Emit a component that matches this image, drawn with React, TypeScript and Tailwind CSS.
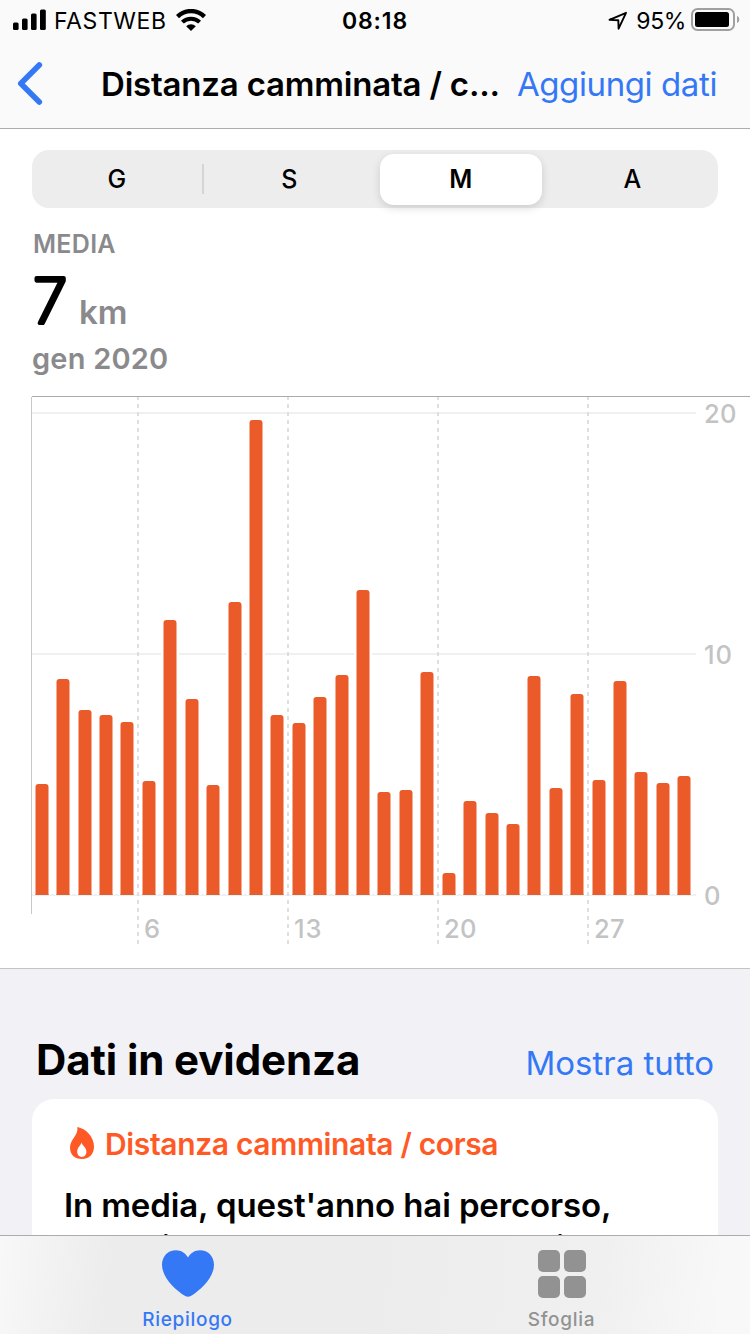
import React, { useState } from "react";

interface DayDistance {
  day: number;
  top: number;
}

const BASELINE = 895;
const CHART_TOP = 396;

// y of the top edge of every bar, one per day of the month
const barTops = [
  784, 679, 710, 715, 722, 781, 620, 699, 785, 602, 420, 715, 723, 697, 675,
  590, 792, 790, 672, 873, 801, 813, 824, 676, 788, 694, 780, 681, 772, 783,
  776,
];

const days: DayDistance[] = barTops.map((top, i) => ({ day: i + 1, top }));

const barX = (day: number) => Math.floor(35.25 + 21.418 * (day - 1)) + 0.5;

const StatusBar: React.FC = () => (
  <div className="grid h-[41px] grid-cols-3 items-center pr-[10px] pl-[13px] text-black">
    <div className="flex items-center">
      <svg width="33" height="22" viewBox="0 0 33 22" className="-mt-px">
        <rect x="0" y="13.5" width="5.6" height="7.5" rx="1.5" />
        <rect x="9" y="9.5" width="5.6" height="11.5" rx="1.5" />
        <rect x="18" y="4.5" width="5.6" height="16.5" rx="1.5" />
        <rect x="27" y="0.5" width="5.8" height="20.5" rx="1.5" />
      </svg>
      <span className="ml-2 pt-px text-[23px] tracking-[0.6px]">FASTWEB</span>
      <svg
        width="30"
        height="22"
        viewBox="0 0 30 22"
        className="-mt-[2px] ml-[9px]"
      >
        <path
          d="M1.5 7.6a19.2 19.2 0 0 1 27 0"
          fill="none"
          stroke="#000"
          strokeWidth="4.4"
        />
        <path
          d="M6.4 13.200a12.2 12.2 0 0 1 17.2 0"
          fill="none"
          stroke="#000"
          strokeWidth="4"
        />
        <path d="M10.2 17.300a6.8 6.8 0 0 1 9.6 0L15 22z" />
      </svg>
    </div>
    <span className="pt-px pr-[3px] text-center text-[23px] font-semibold tracking-[0.9px]">
      08:18
    </span>
    <div className="flex items-center justify-end">
      <svg width="20" height="20" viewBox="0 0 20 20">
        <path
          d="M1.5 8.8 18 1.800 10.600 17.700 10.300 9.200z"
          fill="none"
          stroke="#000"
          strokeWidth="1.9"
          strokeLinejoin="round"
        />
      </svg>
      <span className="ml-2 pt-px text-[23px] tracking-[-0.4px]">95%</span>
      <svg
        width="49"
        height="24"
        viewBox="0 0 49 24"
        className="-mt-[3px] ml-[5px]"
      >
        <rect
          x="1"
          y="2"
          width="42"
          height="21"
          rx="5.5"
          fill="none"
          stroke="#a0a0a0"
          strokeWidth="2"
        />
        <rect x="4" y="5" width="34" height="15" rx="2.5" />
        <path d="M46 9c3 .8 3 6.200 0 7z" fill="#a0a0a0" />
      </svg>
    </div>
  </div>
);

const DistanceChart: React.FC = () => (
  <svg
    width="750"
    height="572"
    viewBox={`0 ${CHART_TOP} 750 572`}
    className="block"
  >
    {[412, 653, 894].map((y) => (
      <rect key={y} x="32" y={y} width="664" height="2" fill="#f0f0f0" />
    ))}
    {days.map(({ day, top }) => (
      <rect
        key={day}
        x={barX(day) - 2.5}
        y={top - 2.5}
        width="18"
        height={BASELINE - top + 2.5}
        fill="#fff"
      />
    ))}
    {[138, 288, 438, 588].map((x) => (
      <line
        key={x}
        x1={x}
        x2={x}
        y1="396"
        y2="944"
        stroke="#dfdfdf"
        strokeWidth="2"
        strokeDasharray="4 4"
      />
    ))}
    {days.map(({ day, top }) => (
      <g key={day}>
        <path
          d={`M${barX(day)} ${BASELINE}V${top + 3}q0-3 3-3h7q3 0 3 3V${BASELINE}z`}
          fill="#eb5a29"
        />
        <rect
          x={barX(day)}
          y={BASELINE - 1}
          width="13"
          height="1"
          fill="#dc6137"
        />
      </g>
    ))}
    <rect x="31" y="397" width="1" height="517" fill="#c8c8c8" />
    <rect x="32" y="396" width="718" height="1" fill="#aaaaaa" />
    <g fill="#c3c3c4" fontSize="25.5" fontWeight="500" letterSpacing="0.3">
      <text x="704" y="423">20</text>
      <text x="704" y="664" letterSpacing="1">10</text>
      <text x="704" y="905">0</text>
      <text x="144" y="938">6</text>
      <text x="294" y="938" letterSpacing="1">13</text>
      <text x="444" y="938">20</text>
      <text x="594" y="938">27</text>
    </g>
  </svg>
);

const App: React.FC = () => {
  const [range, setRange] = useState("M");

  return (
    <div className="flex h-[1334px] w-[750px] flex-col overflow-hidden bg-white font-['Inter',sans-serif] whitespace-nowrap">
      <header className="h-[129px] shrink-0 border-b border-[#acacac] bg-[#fafafb]">
        <StatusBar />
        <div className="flex h-[87px] items-center pr-[33px] pl-4">
          <svg
            width="28"
            height="44"
            viewBox="0 0 28 44"
            className="-mt-[3px]"
          >
            <path
              d="M23.300 4 4.800 22.500 23.300 41"
              fill="none"
              stroke="#3478f6"
              strokeWidth="5.6"
              strokeLinecap="round"
              strokeLinejoin="round"
            />
          </svg>
          <h1 className="ml-[57px] text-[33px] font-semibold tracking-[-0.2px]">
            Distanza camminata / c...
          </h1>
          <button className="ml-auto text-[33px] tracking-[-0.4px] text-[#3478f6]">
            Aggiungi dati
          </button>
        </div>
      </header>

      <div className="px-8 pt-[21px]">
        <div className="grid h-[58px] grid-cols-4 rounded-[17px] bg-[#ededed] text-[25px] font-medium">
          {["G", "S", "M", "A"].map((item) => (
            <button
              key={item}
              onClick={() => setRange(item)}
              className="flex items-center"
            >
              {range === item ? (
                <span className="mx-auto flex h-[51px] w-[162px] items-center justify-center rounded-[14px] bg-white pt-0.5 font-semibold shadow-[0_3px_8px_rgba(0,0,0,0.14)]">
                  {item}
                </span>
              ) : (
                <span className="flex-1 pt-0.5">{item}</span>
              )}
              {item === "G" && (
                <span className="h-[30px] w-0.5 bg-[#d5d5d7]" />
              )}
            </button>
          ))}
        </div>

        <div className="mt-[21px] ml-px h-[30px] text-[25px] leading-[30px] font-semibold tracking-[0.3px] text-[#8a8a8d]">
          MEDIA
        </div>
        <div className="flex h-[66px] items-start text-[#8a8a8d]">
          <svg width="47" height="84" viewBox="0 0 47 84">
            <text
              x="1"
              y="63.500"
              fontSize="62"
              fontWeight="200"
              fill="#000"
              stroke="#000"
              strokeWidth="4.2"
              strokeLinejoin="round"
            >
              7
            </text>
          </svg>
          <span className="pt-[28px] text-[33px] leading-[50px] font-semibold">
            km
          </span>
        </div>
        <div className="mt-[14px] h-10 text-[29px] leading-10 font-semibold tracking-[0.2px] text-[#8a8a8d]">
          gen 2020
        </div>
      </div>

      <div className="mt-[17px]">
        <DistanceChart />
      </div>

      <section className="min-h-0 flex-1 overflow-hidden border-t border-[#c3c3c6] bg-[#f1f1f6] px-8">
        <div className="flex h-[130px] items-baseline justify-between px-1 pt-[66px]">
          <h2 className="text-[42px] leading-[50px] font-bold tracking-[-0.1px]">
            Dati in evidenza
          </h2>
          <button className="text-[33px] text-[#3478f6]">Mostra tutto</button>
        </div>
        <div className="h-[200px] rounded-t-[22px] bg-white px-8 pt-[25px]">
          <div className="flex h-10 items-center text-[30px] font-semibold tracking-[-0.35px] text-[#ff5a26]">
            <svg
              width="26"
              height="34"
              viewBox="0 0 26 34"
              className="-mt-0.5 ml-[5px]"
            >
              <path
                fill="#ff5a26"
                fillRule="evenodd"
                d="M8.300 1C17 2.500 25 11 25 20.500 25 28 20.500 33 13 33S1 28.500 1 21.500C1 13.500 9.800 9 8.300 1zM12.500 16.500c-1 3.500-4.300 5-4.300 9.100 0 3.200 1.900 5.400 4.700 5.400s4.500-2.200 4.500-5.400c0-4.100-3.900-5.600-4.900-9.100z"
              />
            </svg>
            <span className="ml-[10px]">Distanza camminata / corsa</span>
          </div>
          <p className="mt-[20px] text-[33px] leading-[42px] font-semibold tracking-[-0.12px]">
            In media, quest'anno hai percorso,
            <br />
            camminando o correndo, una distanza
          </p>
        </div>
      </section>

      <nav className="grid h-[99px] shrink-0 grid-cols-2 border-t border-[#acacac] bg-[linear-gradient(97deg,#f8f8f8_0%,#f3f3f3_6%,#ececec_15%,#ececec_50%,#f0f0f0_80%,#f8f8f8_96%)] text-[19px] font-medium tracking-[0.7px]">
        <button className="flex flex-col items-center pt-[14px] text-[#3478f6]">
          <svg width="52" height="48" viewBox="0 0 52 48">
            <path
              fill="#3478f6"
              d="M26 7.500C23.500 3 19 .2 14 .2 6 .2 0 6.200 0 14.700c0 13 13.500 25.500 23.200 31.300 1.900 1.100 3.700 1.100 5.600 0C38.500 40.200 52 27.700 52 14.700 52 6.200 46 .2 38 .2 33 .2 28.500 3 26 7.500z"
            />
          </svg>
          <span className="mt-2 leading-7">Riepilogo</span>
        </button>
        <button className="flex flex-col items-center pt-[14px] pr-[2px] text-[#929292]">
          <div className="grid grid-cols-2 gap-1">
            <div className="size-[22px] rounded-[5px] bg-[#929292]" />
            <div className="size-[22px] rounded-[5px] bg-[#929292]" />
            <div className="size-[22px] rounded-[5px] bg-[#929292]" />
            <div className="size-[22px] rounded-[5px] bg-[#929292]" />
          </div>
          <span className="mt-2 leading-7">Sfoglia</span>
        </button>
      </nav>
    </div>
  );
};

export default App;
